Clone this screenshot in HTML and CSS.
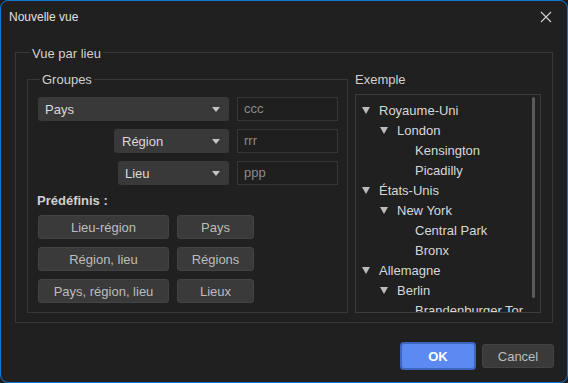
FILE: index.html
```html
<!DOCTYPE html>
<html lang="fr">
<head>
    <meta charset="UTF-8">
    <meta name="viewport" content="width=device-width, initial-scale=1.0">
    <title>Nouvelle vue</title>
    <link rel="stylesheet" href="styles.css">
</head>
<body>

    <div class="window">
        <!-- Title bar -->
        <div class="titlebar">
            <span class="title">Nouvelle vue</span>
            <svg class="close" width="12" height="12" viewBox="0 0 12 12">
                <path d="M1 1 L11 11 M11 1 L1 11" stroke="#d0d0d0" stroke-width="1.1" fill="none"/>
            </svg>
        </div>

        <div class="group outer">
            <div class="group-title">Vue par lieu</div>
            <div class="columns">

                <div class="group groupes">
                    <div class="group-title">Groupes</div>
                    <div class="rows">
                        <div class="row">
                            <div class="combo w-pays"><span>Pays</span><i class="arrow"></i></div>
                            <div class="field">ccc</div>
                        </div>
                        <div class="row">
                            <div class="combo w-region"><span>Région</span><i class="arrow"></i></div>
                            <div class="field">rrr</div>
                        </div>
                        <div class="row">
                            <div class="combo w-lieu"><span>Lieu</span><i class="arrow"></i></div>
                            <div class="field">ppp</div>
                        </div>
                    </div>

                    <div class="presets-label">Prédéfinis :</div>
                    <div class="presets">
                        <button>Lieu-région</button>
                        <button>Pays</button>
                        <button>Région, lieu</button>
                        <button>Régions</button>
                        <button>Pays, région, lieu</button>
                        <button>Lieux</button>
                    </div>
                </div>

                <div class="example">
                    <div class="example-label">Exemple</div>
                    <div class="tree">
                        <div class="node l0"><i class="caret"></i>Royaume-Uni</div>
                        <div class="node l1"><i class="caret"></i>London</div>
                        <div class="node l2"><i class="leaf"></i>Kensington</div>
                        <div class="node l2"><i class="leaf"></i>Picadilly</div>
                        <div class="node l0"><i class="caret"></i>États-Unis</div>
                        <div class="node l1"><i class="caret"></i>New York</div>
                        <div class="node l2"><i class="leaf"></i>Central Park</div>
                        <div class="node l2"><i class="leaf"></i>Bronx</div>
                        <div class="node l0"><i class="caret"></i>Allemagne</div>
                        <div class="node l1"><i class="caret"></i>Berlin</div>
                        <div class="node l2"><i class="leaf"></i>Brandenburger Tor</div>
                        <div class="scroll-thumb"></div>
                    </div>
                </div>

            </div>
        </div>

        <div class="footer">
            <button class="btn-ok">OK</button>
            <button class="btn-cancel">Cancel</button>
        </div>
    </div>

</body>
</html>
```

FILE: styles.css
```css
body {
    margin: 0;
    padding: 0;
    background: #1b1b1b;
    font-family: "Liberation Sans", Arial, sans-serif;
    font-size: 13px;
    color: #d4d4d4;
}

.window {
    width: 568px;
    height: 383px;
    box-sizing: border-box;
    border: 1px solid #1677d2;
    border-radius: 8px;
    background: #202020;
    display: flex;
    flex-direction: column;
    overflow: hidden;
}

/* Title bar */
.titlebar {
    height: 32px;
    flex: none;
    display: flex;
    align-items: center;
    justify-content: space-between;
    padding: 0 15px 0 8px;
}

.title {
    font-size: 12px;
    color: #e0e0e0;
}

.close {
    display: block;
    margin-top: -1px;
}

/* Group boxes */
.group {
    border: 1px solid #383838;
}

.group-title {
    display: table;
    line-height: 15px;
    padding: 0 2px;
    margin-left: 3px;
    background: #202020;
    color: #d0d0d0;
}

.outer {
    margin: 19px 14px 0 14px;
    padding: 0 10px 9px 11px;
}

.outer > .group-title {
    margin-top: -7px;
}

.columns {
    display: flex;
    gap: 7px;
    margin-top: 18px;
}

.groupes {
    width: 321px;
    box-sizing: border-box;
    padding: 0 9px 8px 9px;
}

.groupes > .group-title {
    margin-top: -8px;
}

.rows {
    display: flex;
    flex-direction: column;
    gap: 8px;
    margin-top: 10px;
}

.row {
    display: flex;
    justify-content: flex-end;
    gap: 8px;
}

.combo {
    height: 24px;
    box-sizing: border-box;
    background: #393939;
    border-radius: 3px;
    display: flex;
    align-items: center;
    justify-content: space-between;
    padding: 0 9px 0 7px;
    color: #dadada;
}

.w-pays { width: 191px; }
.w-region { width: 115px; padding-left: 8px; }
.w-lieu { width: 111px; }

.arrow {
    width: 0;
    height: 0;
    border-left: 4px solid transparent;
    border-right: 4px solid transparent;
    border-top: 5px solid #c4c4c4;
}

.field {
    width: 101px;
    height: 24px;
    box-sizing: border-box;
    border: 1px solid #363636;
    background: #1f1f1f;
    color: #8a8a8a;
    padding-left: 6px;
    line-height: 22px;
}

.presets-label {
    font-weight: bold;
    color: #d0d0d0;
    line-height: 15px;
    margin: 8px 0 7px 0;
}

.presets {
    display: grid;
    grid-template-columns: 131px 77px;
    grid-auto-rows: 24px;
    gap: 8px;
    padding-left: 1px;
}

.presets button,
.btn-cancel {
    font-family: "Liberation Sans", Arial, sans-serif;
    font-size: 13px;
    background: #3a3a3a;
    border: 1px solid #434343;
    border-radius: 3px;
    color: #bdbdbd;
    padding: 0;
}

/* Example tree */
.example {
    display: flex;
    flex-direction: column;
    width: 186px;
}

.example-label {
    line-height: 15px;
    margin-top: -7px;
    color: #d0d0d0;
}

.tree {
    height: 219px;
    box-sizing: border-box;
    margin-top: 7px;
    border: 1px solid #3c3c3c;
    padding-top: 5px;
    position: relative;
    overflow: hidden;
}

.node {
    height: 20px;
    display: flex;
    align-items: center;
    color: #d8d8d8;
    white-space: nowrap;
}

.l0 { padding-left: 6px; }
.l1 { padding-left: 24px; }
.l2 { padding-left: 42px; }

.caret,
.leaf {
    width: 17px;
    flex: none;
}

.caret::before {
    content: '';
    display: block;
    width: 0;
    height: 0;
    border-left: 4px solid transparent;
    border-right: 4px solid transparent;
    border-top: 7px solid #bcbcbc;
}

.scroll-thumb {
    position: absolute;
    top: 2px;
    right: 5px;
    width: 3px;
    height: 201px;
    border-radius: 2px;
    background: #5a5a5a;
}

/* Footer buttons */
.footer {
    flex: 1;
    display: flex;
    justify-content: flex-end;
    align-items: flex-start;
    gap: 6px;
    padding: 19px 13px 0 0;
}

.btn-ok {
    width: 76px;
    height: 28px;
    font-family: "Liberation Sans", Arial, sans-serif;
    font-size: 13px;
    font-weight: bold;
    color: #ffffff;
    background: #5b8af2;
    border: 2px solid #3d66c0;
    border-radius: 4px;
}

.btn-cancel {
    width: 72px;
    height: 24px;
    margin-top: 2px;
}
```
